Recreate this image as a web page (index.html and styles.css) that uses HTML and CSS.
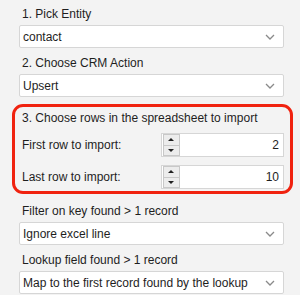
FILE: index.html
```html
<!DOCTYPE html>
<html lang="en">

<head>
  <meta charset="UTF-8" />
  <title>Import Settings</title>
  <link rel="stylesheet" href="styles.css">
</head>

<body>
  <div class="panel">
    <label class="field-label first">1. Pick Entity</label>
    <div class="select">
      <span>contact</span>
      <svg class="chevron" width="10" height="6" viewBox="0 0 10 6"><path d="M1 1 L5 5 L9 1" fill="none" stroke="#8a8a8a" stroke-width="1.3" /></svg>
    </div>

    <label class="field-label">2. Choose CRM Action</label>
    <div class="select">
      <span>Upsert</span>
      <svg class="chevron" width="10" height="6" viewBox="0 0 10 6"><path d="M1 1 L5 5 L9 1" fill="none" stroke="#8a8a8a" stroke-width="1.3" /></svg>
    </div>

    <!-- highlighted section -->
    <div class="highlight">
      <div class="section-title">3. Choose rows in the spreadsheet to import</div>
      <div class="row">
        <span>First row to import:</span>
        <div class="spinner">
          <div class="spin-btns">
            <div class="spin up"></div>
            <div class="spin down"></div>
          </div>
          <span class="spin-value">2</span>
        </div>
      </div>
      <div class="row">
        <span>Last row to import:</span>
        <div class="spinner">
          <div class="spin-btns">
            <div class="spin up"></div>
            <div class="spin down"></div>
          </div>
          <span class="spin-value">10</span>
        </div>
      </div>
    </div>

    <label class="field-label">Filter on key found &gt; 1 record</label>
    <div class="select">
      <span>Ignore excel line</span>
      <svg class="chevron" width="10" height="6" viewBox="0 0 10 6"><path d="M1 1 L5 5 L9 1" fill="none" stroke="#8a8a8a" stroke-width="1.3" /></svg>
    </div>

    <label class="field-label">Lookup field found &gt; 1 record</label>
    <div class="select">
      <span>Map to the first record found by the lookup</span>
      <svg class="chevron" width="10" height="6" viewBox="0 0 10 6"><path d="M1 1 L5 5 L9 1" fill="none" stroke="#8a8a8a" stroke-width="1.3" /></svg>
    </div>
  </div>
</body>

</html>
```
FILE: styles.css
```css
body {
  margin: 0;
  background-color: #f3f3f3;
  font-family: "Liberation Sans", Arial, sans-serif;
  font-size: 12px;
  color: #1e1e1e;
}

.panel {
  display: flex;
  flex-direction: column;
  padding: 0 16px 0 19px;
  width: 265px;
}

.field-label {
  display: block;
  height: 14px;
  line-height: 14px;
  padding-left: 3px;
  margin: 8px 0 4px;
}

.field-label.first {
  margin-top: 7px;
}

.select {
  display: flex;
  align-items: center;
  justify-content: space-between;
  height: 21px;
  background: #ffffff;
  border: 1px solid #d6d6d6;
  border-radius: 2px;
  padding: 0 8px 0 3px;
}

.chevron {
  display: block;
}

.highlight {
  margin: 7px -9px 2px -7px;
  border: 3px solid #f0220f;
  border-radius: 11px;
  padding: 2px 6px 2px 4px;
}

.section-title {
  height: 14px;
  line-height: 14px;
  padding-left: 3px;
  margin-top: 2px;
}

.row {
  display: flex;
  align-items: center;
  justify-content: space-between;
  padding-left: 3px;
  margin-top: 8px;
}

.spinner {
  display: flex;
  align-items: center;
  width: 121px;
  height: 22px;
  background: #ffffff;
  border: 1px solid #d6d6d6;
}

.spin-btns {
  display: flex;
  flex-direction: column;
  width: 15px;
  height: 20px;
  margin-left: 1px;
  border: 1px solid #c8c8c8;
  background: #ececec;
}

.spin {
  flex: 1;
  position: relative;
}

.spin.up {
  border-bottom: 1px solid #c8c8c8;
}

.spin.up::after,
.spin.down::after {
  content: "";
  position: absolute;
  left: 4px;
  top: 3px;
  border-left: 3px solid transparent;
  border-right: 3px solid transparent;
}

.spin.up::after {
  border-bottom: 3px solid #202020;
}

.spin.down::after {
  top: 3px;
  border-top: 3px solid #202020;
}

.spin-value {
  flex: 1;
  text-align: right;
  padding-right: 4px;
}
```
